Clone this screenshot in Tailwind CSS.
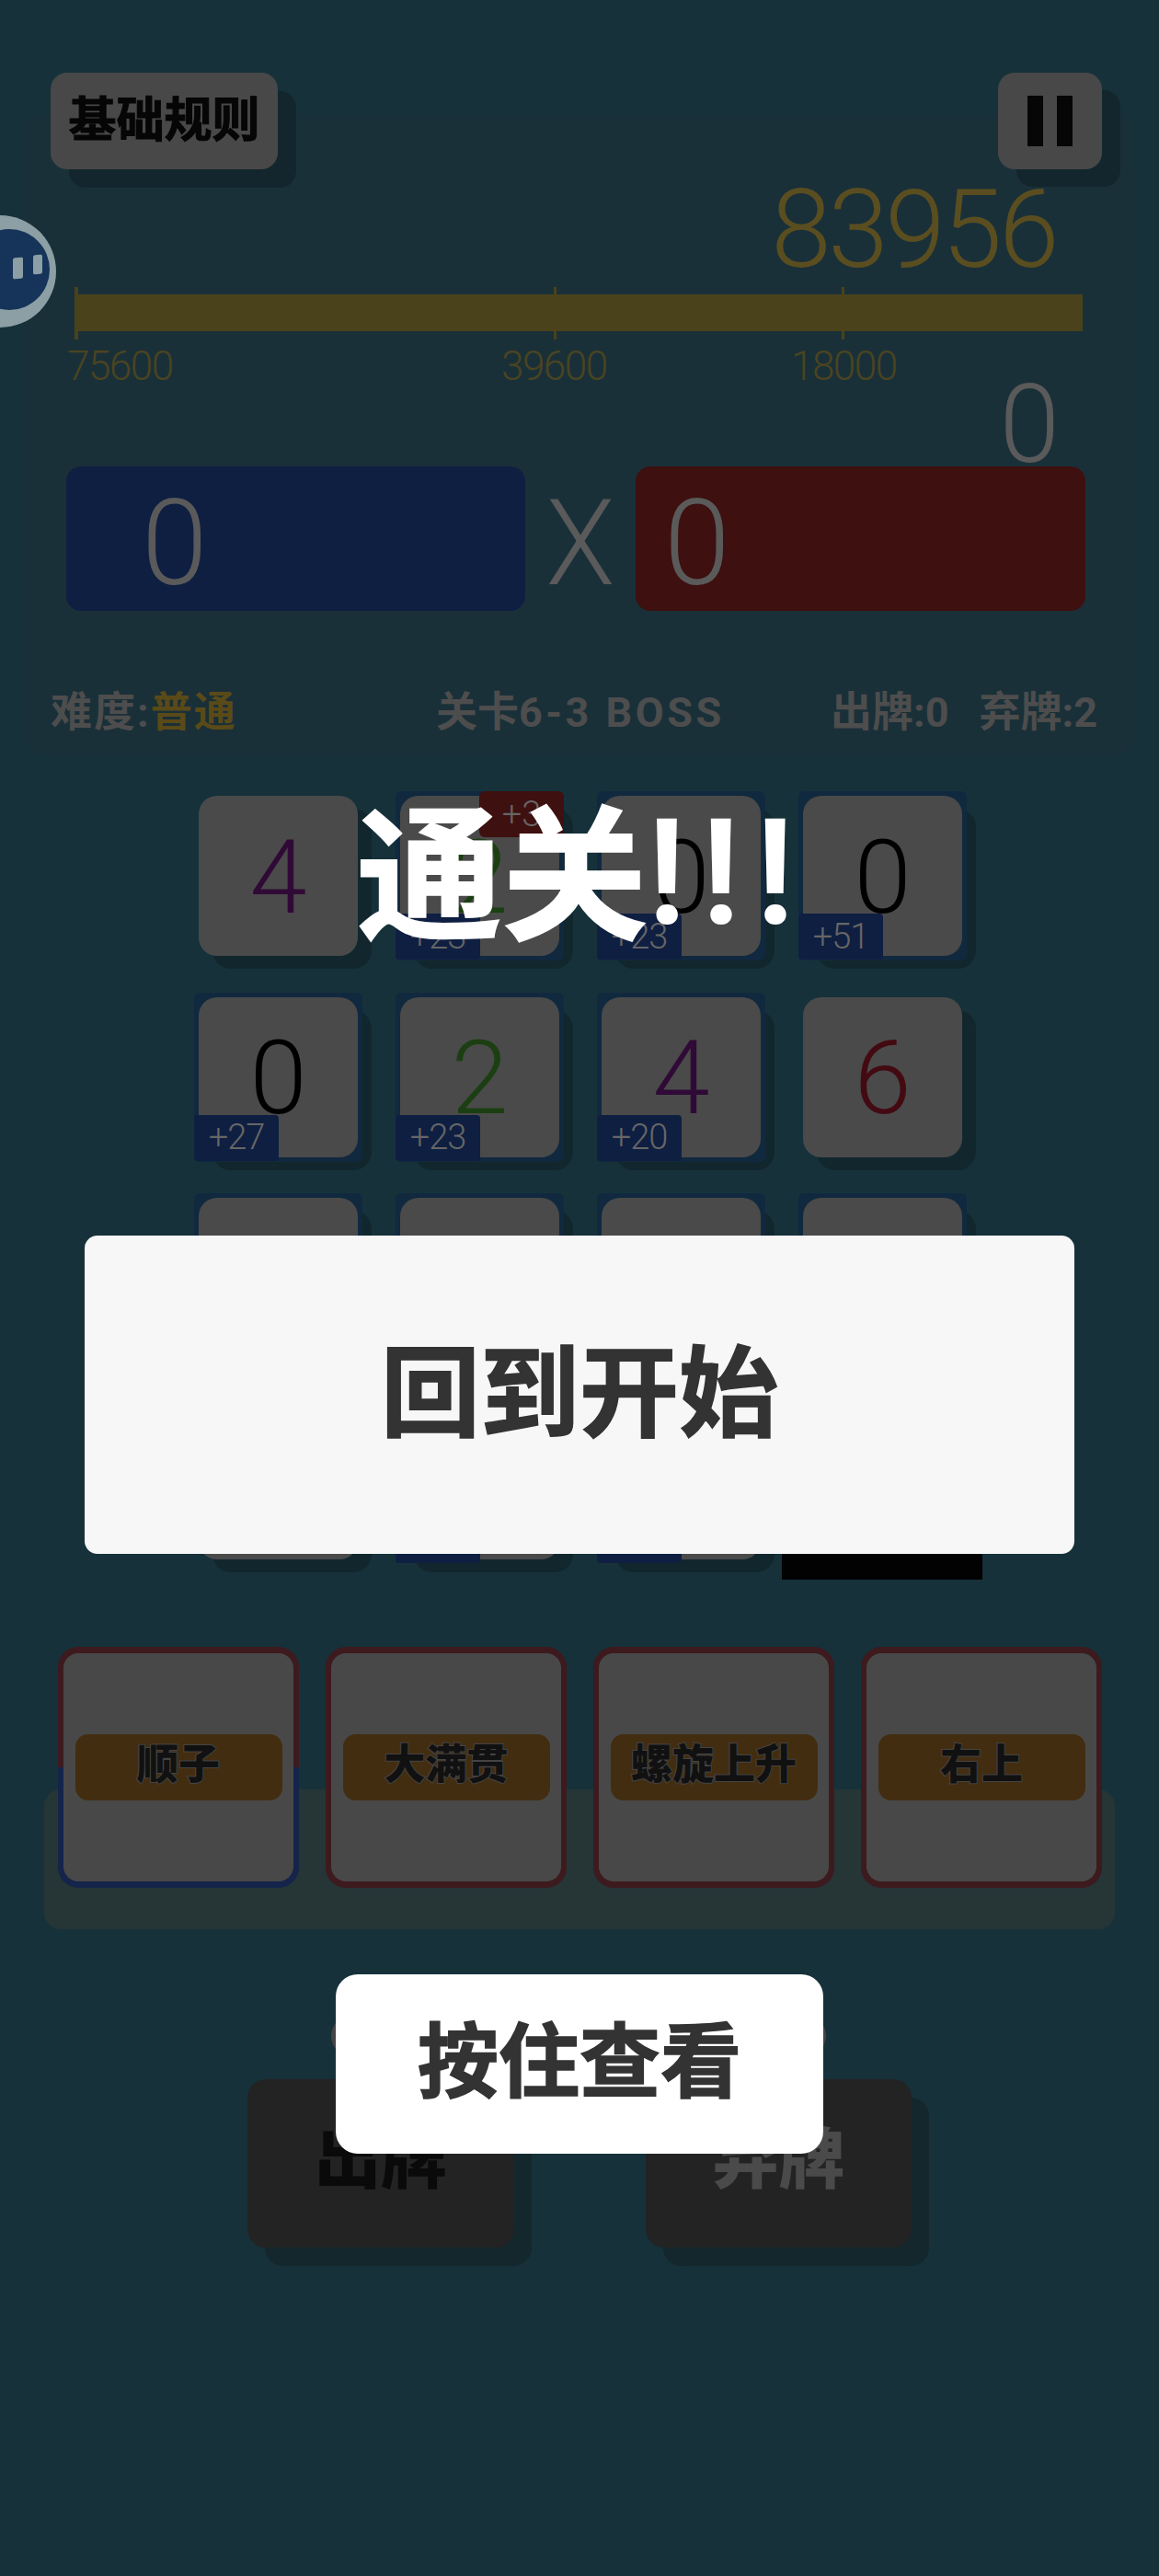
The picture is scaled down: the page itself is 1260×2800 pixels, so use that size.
<!DOCTYPE html>
<html lang="zh-CN">
  <head>
    <meta charset="UTF-8" />
    <title>通关</title>
    <script src="https://cdn.jsdelivr.net/npm/@tailwindcss/browser@4"></script>
  </head>
  <body class="bg-[#16313a]">
    <div class="relative w-[1260px] h-[2800px] overflow-hidden bg-[#16313a] font-['Roboto','Noto_Sans_CJK_SC',sans-serif] pt-[79px]">
      <!-- faint panel behind the score -->
      <div class="absolute left-[28px] top-[125px] w-[1204px] h-[695px] rounded-[16px] bg-[#1a3039]"></div>

      <!-- avatar -->
      <div class="absolute left-[-61px] top-[234px] w-[122px] h-[122px] rounded-full bg-[#8b9fa4] overflow-hidden">
        <div class="absolute left-[27px] top-[15px] w-[88px] h-[88px] rounded-full bg-[#16345a]"></div>
        <div class="absolute left-[75px] top-[46px] w-[11px] h-[23px] rounded-[2px] bg-[#8b9fa4] -skew-y-6"></div>
        <div class="absolute left-[97px] top-[43px] w-[10px] h-[21px] rounded-[2px] bg-[#8b9fa4] -skew-y-6"></div>
      </div>

      <!-- header -->
      <div class="relative flex justify-between h-[105px] pl-[55px] pr-[62px]">
        <div class="flex items-center justify-center w-[247px] h-[105px] rounded-[18px] bg-[#484848] shadow-[20px_20px_0_#13262d] text-[52px] font-bold text-[#060606] [-webkit-text-stroke:1px_#060606]">基础规则</div>
        <div class="flex items-center justify-center gap-[15px] w-[113px] h-[105px] rounded-[18px] bg-[#484848] shadow-[20px_19px_0_#13262d]">
          <span class="w-[17px] h-[55px] bg-[#060606]"></span>
          <span class="w-[17px] h-[55px] bg-[#060606]"></span>
        </div>
      </div>

      <!-- score -->
      <div class="relative flex justify-end h-[136px] pr-[112px] pt-[16px]">
        <span class="font-light text-[118px] leading-[100px] tracking-[-3.5px] text-[#5a4e20]">83956</span>
      </div>

      <!-- progress bar -->
      <div class="relative ml-[81px] w-[1096px] h-[40px] bg-[#49421b]">
        <span class="absolute left-0 top-[-8px] w-[4px] h-[57px] bg-[#49421b]"></span>
        <span class="absolute left-[521px] top-[-8px] w-[3px] h-[57px] bg-[#49421b]"></span>
        <span class="absolute left-[834px] top-[-8px] w-[3px] h-[57px] bg-[#49421b]"></span>
        <span class="absolute left-[-8px] top-[56px] font-light text-[44px] leading-[44px] tracking-[-1.5px] text-[#4a4420]">75600</span>
        <span class="absolute left-[464px] top-[56px] font-light text-[44px] leading-[44px] tracking-[-1.5px] text-[#4a4420]">39600</span>
        <span class="absolute left-[779px] top-[56px] font-light text-[44px] leading-[44px] tracking-[-1.5px] text-[#4a4420]">18000</span>
      </div>

      <!-- round total -->
      <div class="relative flex justify-end items-end h-[147px] pr-[108px]">
        <span class="font-light text-[118px] leading-[90px] text-[#5a5a5a]">0</span>
      </div>

      <!-- chips x mult -->
      <div class="relative flex items-center h-[157px] pl-[72px]">
        <div class="flex items-center w-[499px] h-full rounded-[16px] bg-[#0f1f42] pl-[82px] pt-[10px] font-light text-[129px] text-[#5a5a5a]">0</div>
        <div class="flex justify-center w-[120px] pt-[10px] font-light text-[129px] text-[#5a5a5a] scale-x-[.95]">X</div>
        <div class="flex items-center w-[489px] h-full rounded-[16px] bg-[#3e100f] pl-[31px] pt-[10px] font-light text-[129px] text-[#5a5a5a]">0</div>
      </div>

      <!-- level info -->
      <div class="relative flex items-center h-[44px] mt-[87px] pl-[55px] pr-[67px] pt-[4px] text-[45px] font-bold text-[#4d4d4d]">
        <span class="w-[201px] tracking-[2px] whitespace-nowrap">难度:<span class="text-[#5a4a18]">普通</span></span>
        <span class="whitespace-nowrap ml-[218px]">关卡<span class="tracking-[3.5px]">6-3 BOSS</span></span>
        <span class="flex gap-[33px] ml-auto whitespace-nowrap"><span>出牌:0</span><span>弃牌:2</span></span>
      </div>

      <!-- tile grid -->
      <div class="relative grid grid-cols-[repeat(4,173px)] gap-x-[46px] gap-y-[44.5px] mt-[70px] pl-[216px]">
        <!-- row 1 -->
        <div class="relative h-[174px]">
          <div class="absolute left-[15px] top-[14px] w-full h-full rounded-[20px] bg-[#11272d]"></div>
          <div class="absolute inset-0 flex items-center justify-center rounded-[20px] bg-[#4a4a4a] pt-[3px] font-light text-[112px] text-[#300a36]">4</div>
        </div>
        <div class="relative h-[174px]">
          <div class="absolute left-[15px] top-[14px] w-full h-full rounded-[20px] bg-[#11272d]"></div>
          <div class="absolute -inset-[5px] rounded-[6px] bg-[#11293f]"></div>
          <div class="absolute inset-0 flex items-center justify-center rounded-[20px] bg-[#4a4a4a] pt-[3px] font-light text-[112px] text-[#1b3f12]">2</div>
          <div class="absolute left-[86px] top-[-5px] flex items-center justify-center w-[92px] h-[50px] rounded-[6px] bg-[#3e100f] font-light text-[38px] text-[#666]">+3</div>
          <div class="absolute left-[-5px] top-[128px] flex items-center justify-center w-[92px] h-[50px] rounded-[4px] bg-[#0f1f42] font-light text-[38px] tracking-[-1px] text-[#666]">+23</div>
        </div>
        <div class="relative h-[174px]">
          <div class="absolute left-[15px] top-[14px] w-full h-full rounded-[20px] bg-[#11272d]"></div>
          <div class="absolute -inset-[5px] rounded-[6px] bg-[#11293f]"></div>
          <div class="absolute inset-0 flex items-center justify-center rounded-[20px] bg-[#4a4a4a] pt-[3px] font-light text-[112px] text-[#000]">0</div>
          <div class="absolute left-[-5px] top-[128px] flex items-center justify-center w-[92px] h-[50px] rounded-[4px] bg-[#0f1f42] font-light text-[38px] tracking-[-1px] text-[#666]">+23</div>
        </div>
        <div class="relative h-[174px]">
          <div class="absolute left-[15px] top-[14px] w-full h-full rounded-[20px] bg-[#11272d]"></div>
          <div class="absolute -inset-[5px] rounded-[6px] bg-[#11293f]"></div>
          <div class="absolute inset-0 flex items-center justify-center rounded-[20px] bg-[#4a4a4a] pt-[3px] font-light text-[112px] text-[#000]">0</div>
          <div class="absolute left-[-5px] top-[128px] flex items-center justify-center w-[92px] h-[50px] rounded-[4px] bg-[#0f1f42] font-light text-[38px] tracking-[-1px] text-[#666]">+51</div>
        </div>
        <!-- row 2 -->
        <div class="relative h-[174px]">
          <div class="absolute left-[15px] top-[14px] w-full h-full rounded-[20px] bg-[#11272d]"></div>
          <div class="absolute -inset-[5px] rounded-[6px] bg-[#11293f]"></div>
          <div class="absolute inset-0 flex items-center justify-center rounded-[20px] bg-[#4a4a4a] pt-[3px] font-light text-[112px] text-[#000]">0</div>
          <div class="absolute left-[-5px] top-[128px] flex items-center justify-center w-[92px] h-[50px] rounded-[4px] bg-[#0f1f42] font-light text-[38px] tracking-[-1px] text-[#666]">+27</div>
        </div>
        <div class="relative h-[174px]">
          <div class="absolute left-[15px] top-[14px] w-full h-full rounded-[20px] bg-[#11272d]"></div>
          <div class="absolute -inset-[5px] rounded-[6px] bg-[#11293f]"></div>
          <div class="absolute inset-0 flex items-center justify-center rounded-[20px] bg-[#4a4a4a] pt-[3px] font-light text-[112px] text-[#1b3f12]">2</div>
          <div class="absolute left-[-5px] top-[128px] flex items-center justify-center w-[92px] h-[50px] rounded-[4px] bg-[#0f1f42] font-light text-[38px] tracking-[-1px] text-[#666]">+23</div>
        </div>
        <div class="relative h-[174px]">
          <div class="absolute left-[15px] top-[14px] w-full h-full rounded-[20px] bg-[#11272d]"></div>
          <div class="absolute -inset-[5px] rounded-[6px] bg-[#11293f]"></div>
          <div class="absolute inset-0 flex items-center justify-center rounded-[20px] bg-[#4a4a4a] pt-[3px] font-light text-[112px] text-[#300a36]">4</div>
          <div class="absolute left-[-5px] top-[128px] flex items-center justify-center w-[92px] h-[50px] rounded-[4px] bg-[#0f1f42] font-light text-[38px] tracking-[-1px] text-[#666]">+20</div>
        </div>
        <div class="relative h-[174px]">
          <div class="absolute left-[15px] top-[14px] w-full h-full rounded-[20px] bg-[#11272d]"></div>
          <div class="absolute inset-0 flex items-center justify-center rounded-[20px] bg-[#4a4a4a] pt-[3px] font-light text-[112px] text-[#430a12]">6</div>
        </div>
        <!-- row 3 -->
        <div class="relative h-[174px]">
          <div class="absolute left-[15px] top-[14px] w-full h-full rounded-[20px] bg-[#11272d]"></div>
          <div class="absolute -inset-[5px] rounded-[6px] bg-[#11293f]"></div>
          <div class="absolute inset-0 rounded-[20px] bg-[#4a4a4a]"></div>
        </div>
        <div class="relative h-[174px]">
          <div class="absolute left-[15px] top-[14px] w-full h-full rounded-[20px] bg-[#11272d]"></div>
          <div class="absolute -inset-[5px] rounded-[6px] bg-[#11293f]"></div>
          <div class="absolute inset-0 rounded-[20px] bg-[#4a4a4a]"></div>
        </div>
        <div class="relative h-[174px]">
          <div class="absolute left-[15px] top-[14px] w-full h-full rounded-[20px] bg-[#11272d]"></div>
          <div class="absolute -inset-[5px] rounded-[6px] bg-[#11293f]"></div>
          <div class="absolute inset-0 rounded-[20px] bg-[#4a4a4a]"></div>
        </div>
        <div class="relative h-[174px]">
          <div class="absolute left-[15px] top-[14px] w-full h-full rounded-[20px] bg-[#11272d]"></div>
          <div class="absolute -inset-[5px] rounded-[6px] bg-[#11293f]"></div>
          <div class="absolute inset-0 rounded-[20px] bg-[#4a4a4a]"></div>
        </div>
        <!-- row 4 -->
        <div class="relative h-[174px]">
          <div class="absolute left-[15px] top-[14px] w-full h-full rounded-[20px] bg-[#11272d]"></div>
          <div class="absolute inset-0 rounded-[20px] bg-[#4a4a4a]"></div>
        </div>
        <div class="relative h-[174px]">
          <div class="absolute left-[15px] top-[14px] w-full h-full rounded-[20px] bg-[#11272d]"></div>
          <div class="absolute inset-0 rounded-[20px] bg-[#4a4a4a]"></div>
          <div class="absolute left-[-5px] top-[128px] w-[92px] h-[50px] rounded-[4px] bg-[#0f1f42]"></div>
        </div>
        <div class="relative h-[174px]">
          <div class="absolute left-[15px] top-[14px] w-full h-full rounded-[20px] bg-[#11272d]"></div>
          <div class="absolute inset-0 rounded-[20px] bg-[#4a4a4a]"></div>
          <div class="absolute left-[-5px] top-[128px] w-[92px] h-[50px] rounded-[4px] bg-[#0f1f42]"></div>
        </div>
        <div class="relative h-[174px]">
          <div class="absolute left-[-23px] top-[-22px] w-[218px] h-[218px] bg-[#020202]"></div>
        </div>
      </div>

      <!-- skill cards -->
      <div class="relative flex gap-[29px] mt-[95.5px] pl-[63px]">
        <div class="absolute left-[48px] top-[155px] w-[1164px] h-[152px] rounded-[18px] bg-[#263536]"></div>
        <div class="relative w-[262px] h-[262px] rounded-[22px] px-[6px] py-[7px] bg-[linear-gradient(#3d1a1e_50%,#14244a_50%)]">
          <div class="flex items-center justify-center w-full h-full rounded-[16px] bg-[#484848]">
            <div class="flex items-center justify-center w-[225px] h-[72px] rounded-[14px] bg-[#432d10] text-[45px] font-black text-[#111] pb-[4px] [-webkit-text-stroke:2px_#444] [paint-order:stroke_fill]">顺子</div>
          </div>
        </div>
        <div class="relative w-[262px] h-[262px] rounded-[22px] px-[6px] py-[7px] bg-[#3d1a1e]">
          <div class="flex items-center justify-center w-full h-full rounded-[16px] bg-[#484848]">
            <div class="flex items-center justify-center w-[225px] h-[72px] rounded-[14px] bg-[#432d10] text-[45px] font-black text-[#111] pb-[4px] [-webkit-text-stroke:2px_#444] [paint-order:stroke_fill]">大满贯</div>
          </div>
        </div>
        <div class="relative w-[262px] h-[262px] rounded-[22px] px-[6px] py-[7px] bg-[#3d1a1e]">
          <div class="flex items-center justify-center w-full h-full rounded-[16px] bg-[#484848]">
            <div class="flex items-center justify-center w-[225px] h-[72px] rounded-[14px] bg-[#432d10] text-[45px] font-black text-[#111] pb-[4px] [-webkit-text-stroke:2px_#444] [paint-order:stroke_fill]">螺旋上升</div>
          </div>
        </div>
        <div class="relative w-[262px] h-[262px] rounded-[22px] px-[6px] py-[7px] bg-[#3d1a1e]">
          <div class="flex items-center justify-center w-full h-full rounded-[16px] bg-[#484848]">
            <div class="flex items-center justify-center w-[225px] h-[72px] rounded-[14px] bg-[#432d10] text-[45px] font-black text-[#111] pb-[4px] [-webkit-text-stroke:2px_#444] [paint-order:stroke_fill]">右上</div>
          </div>
        </div>
      </div>

      <!-- play / discard -->
      <div class="flex gap-[143px] mt-[208px] pl-[269px]">
        <div class="flex items-center justify-center w-[290px] h-[183px] rounded-[20px] bg-[#232323] shadow-[19px_20px_0_#13272d] text-[72px] font-black text-[#0a0a0a] pb-[8px]">出牌</div>
        <div class="flex items-center justify-center w-[289px] h-[183px] rounded-[20px] bg-[#232323] shadow-[19px_20px_0_#13272d] text-[72px] font-black text-[#4a4a4a] pb-[8px]">弃牌</div>
      </div>

      <!-- overlay -->
      <div class="absolute left-[360px] top-[2190px] w-[538px] h-[46px] rounded-full bg-[#444]"></div>
      <div class="absolute left-0 top-[870px] w-full pl-[8px] text-center text-[158px] leading-[170px] font-bold text-white whitespace-nowrap [-webkit-text-stroke:2px_#fff]">通关<span class="relative top-[-6px] font-medium tracking-[17px]">!!!</span></div>
      <div class="absolute left-[92px] top-[1343px] flex items-center justify-center w-[1076px] h-[346px] rounded-[14px] bg-[#f7f7f7] text-[108px] font-bold text-[#333] [-webkit-text-stroke:1.5px_#333]">回到开始</div>
      <div class="absolute left-[365px] top-[2146px] flex items-center justify-center w-[530px] h-[195px] rounded-[24px] bg-white text-[88px] font-bold text-[#333] pb-[4px] [-webkit-text-stroke:1.5px_#333]">按住查看</div>
    </div>
  </body>
</html>
